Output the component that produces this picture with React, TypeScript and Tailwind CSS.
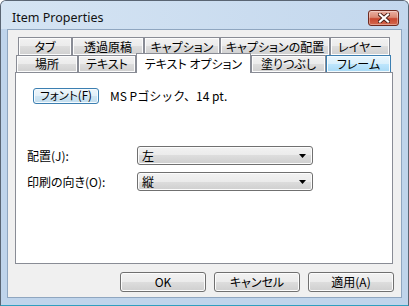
import React from "react";

const jp = "font-['Noto_Sans_CJK_JP',sans-serif] [font-feature-settings:'palt']";
const btnBg =
  "bg-[linear-gradient(#f2f2f2_0%,#ebebeb_50%,#dddddd_50%,#cfcfcf_100%)] shadow-[inset_0_0_0_1px_#fcfcfc]";
const hoverBg =
  "bg-[linear-gradient(#eaf6fd_0%,#d9f0fc_50%,#bee6fd_50%,#a7d9f5_100%)] shadow-[inset_0_0_0_1px_#f4fbfe]";

function Tab1({ label, w }: { label: string; w: string }) {
  return (
    <div
      className={`${w} h-[18px] border border-b-0 border-[#898c95] ${btnBg} flex items-center justify-center text-[12px] leading-none text-black ${jp}`}
    >
      {label}
    </div>
  );
}

function Tab2({ label, w, hover }: { label: string; w: string; hover?: boolean }) {
  return (
    <div
      className={`${w} h-[17px] border border-b-0 ${
        hover ? `border-[#3c7fb1] ${hoverBg}` : `border-[#898c95] ${btnBg}`
      } flex items-center justify-center text-[12px] leading-none text-black ${jp}`}
    >
      {label}
    </div>
  );
}

function Combo({ value }: { value: string }) {
  return (
    <div
      className={`w-[176px] h-[19px] rounded-[3px] border border-[#707070] ${btnBg} flex items-center justify-between pl-[4px] pr-[6px] text-[12px] leading-none text-black ${jp}`}
    >
      <span>{value}</span>
      <svg width="7" height="4" viewBox="0 0 7 4">
        <path d="M0 0H7L3.5 4Z" fill="#000" />
      </svg>
    </div>
  );
}

function Btn({ label }: { label: string }) {
  return (
    <div
      className={`w-[86px] h-[20px] rounded-[3px] border border-[#707070] ${btnBg} flex items-center justify-center text-[12px] leading-none text-black ${jp}`}
    >
      {label}
    </div>
  );
}

export default function App() {
  return (
    <div className="w-[409px] h-[306px] bg-white">
      <div className="w-[409px] h-[306px] flex flex-col rounded-t-[6px] border border-[#5a6573] border-b-[#2f9fbf] bg-[#bfd4eb]">
        <div className="h-[28px] pt-[6px] pl-[11px] pr-[9px] flex items-center justify-between rounded-t-[5px] bg-[linear-gradient(90deg,#d5e4f3,#c3d7ed)]">
          <span className="font-['Noto_Sans',sans-serif] text-[12.5px] leading-none text-[#111]">
            Item Properties
          </span>
          <div className="w-[31px] h-[16px] rounded-[3px] border border-[#6e2a20] bg-[linear-gradient(#eab0a2_0%,#db8a75_45%,#c8472f_55%,#d4694f_100%)] shadow-[inset_0_0_0_1px_rgba(255,255,255,0.35)] flex items-center justify-center">
            <svg width="12" height="10" viewBox="0 0 12 10">
              <path d="M2 1.5L10 8.5M10 1.5L2 8.5" stroke="#4a1d15" strokeWidth="4" strokeLinecap="square" />
              <path d="M2 1.5L10 8.5M10 1.5L2 8.5" stroke="#ffffff" strokeWidth="2.2" strokeLinecap="square" />
            </svg>
          </div>
        </div>
        <div className="flex-1 mx-[6px] mb-[7px] border border-[#8fa6c0] bg-[#f0f0f0] flex flex-col pt-[7px]">
          <div className="flex ml-[10px]">
            <Tab1 label="タブ" w="w-[54px]" />
            <Tab1 label="透過原稿" w="w-[72px]" />
            <Tab1 label="キャプション" w="w-[76px]" />
            <Tab1 label="キャプションの配置" w="w-[110px]" />
            <Tab1 label="レイヤー" w="w-[60px]" />
          </div>
          <div className="flex items-end ml-[8px] -mt-[2px] h-[19px] relative z-10">
            <Tab2 label="場所" w="w-[62px]" />
            <Tab2 label="テキスト" w="w-[58px]" />
            <div
              className={`w-[115px] h-[20px] -mb-px border border-b-0 border-[#898c95] bg-white flex items-center justify-center text-[12px] leading-none text-black ${jp}`}
            >
              テキスト オプション
            </div>
            <Tab2 label="塗りつぶし" w="w-[75px]" />
            <Tab2 label="フレーム" w="w-[65px]" hover />
          </div>
          <div className="ml-[7px] w-[378px] h-[192px] border border-[#898c95] bg-white flex flex-col">
            <div className="flex items-center pl-[17px] pt-[15px]">
              <div
                className={`w-[66px] h-[16px] rounded-[3px] border border-[#3c7fb1] bg-[linear-gradient(#eef6fb_0%,#e2eff8_50%,#cfe5f3_50%,#c2ddee_100%)] shadow-[inset_0_0_0_1px_#f6fbfe] flex items-center justify-center text-[11.5px] leading-none text-black ${jp}`}
              >
                フォント(F)
              </div>
              <span className="ml-[11px] text-[12px] leading-none text-black font-['Noto_Sans_CJK_JP',sans-serif]">
                MS Pゴシック、14 pt.
              </span>
            </div>
            <div className="flex flex-col gap-[7px] pl-[11px] mt-[42px]">
              <div className="flex items-center">
                <span className={`w-[110px] text-[12px] leading-none text-black ${jp}`}>配置(J):</span>
                <Combo value="左" />
              </div>
              <div className="flex items-center">
                <span className={`w-[110px] text-[12px] leading-none text-black ${jp}`}>
                  印刷の向き(O):
                </span>
                <Combo value="縦" />
              </div>
            </div>
          </div>
          <div className="flex justify-end gap-[8px] pr-[7px] mt-[8px]">
            <Btn label="OK" />
            <Btn label="キャンセル" />
            <Btn label="適用(A)" />
          </div>
        </div>
      </div>
    </div>
  );
}
